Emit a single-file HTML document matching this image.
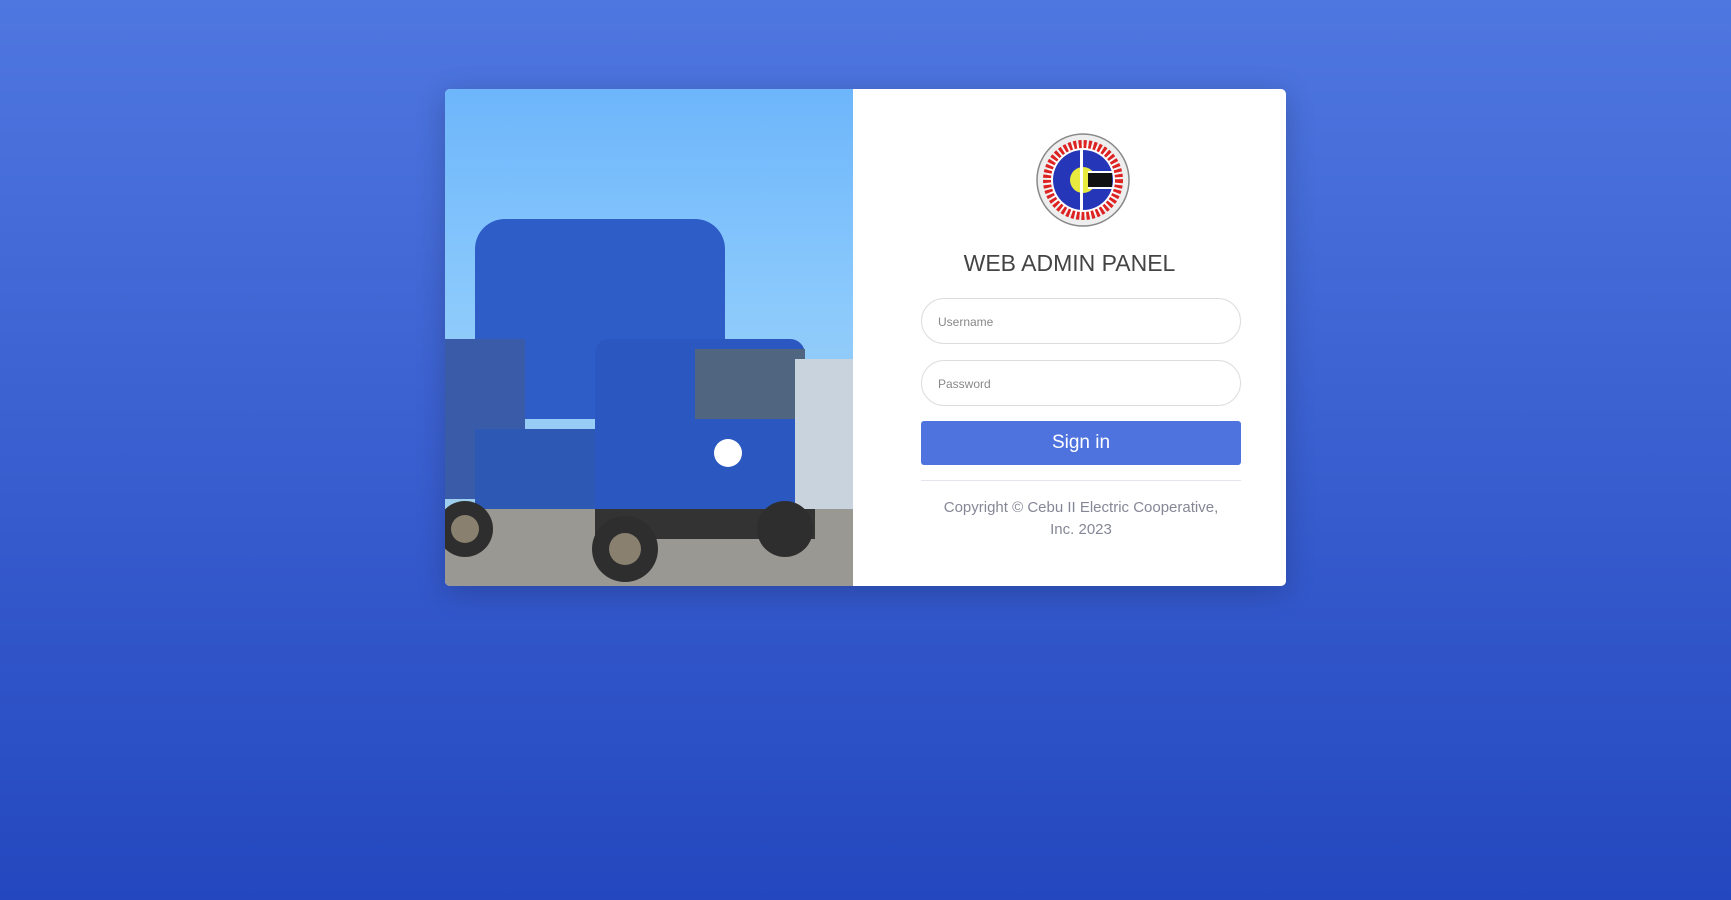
<!DOCTYPE html>
<html><head><style>
body{margin:0;width:1731px;height:900px;background:linear-gradient(#4f77e0,#2447bf);font-family:"Liberation Sans",sans-serif;position:relative;overflow:hidden}
.card{position:absolute;left:445px;top:89px;width:841px;height:497px;background:#fff;border-radius:5px;overflow:hidden;box-shadow:0 6px 30px rgba(0,0,0,.2)}
.photo{position:absolute;left:0;top:0;width:408px;height:497px;background:linear-gradient(#6db6fb 0%,#8ccafc 45%,#a7cfe8 100%)}
.in{position:absolute;left:476px;width:320px;height:46px;border:1px solid #ddd;border-radius:23px;box-sizing:border-box;font-size:12px;color:#888;padding:16px 16px}
</style></head><body>
<div class="card">
<div class="photo">
<svg width="408" height="497">
<rect x="0" y="420" width="408" height="77" fill="#9a9893"/>
<rect x="30" y="130" width="250" height="200" rx="30" fill="#2f5dc8"/>
<rect x="0" y="250" width="80" height="160" fill="#3a5ca8"/>
<rect x="30" y="340" width="130" height="80" fill="#2d59b5"/>
<rect x="150" y="250" width="210" height="200" rx="15" fill="#2a58c0"/>
<rect x="250" y="260" width="110" height="70" fill="#506680"/>
<rect x="350" y="270" width="58" height="150" fill="#c9d3dd"/>
<rect x="150" y="420" width="220" height="30" fill="#333"/>
<circle cx="20" cy="440" r="28" fill="#2e2e2e"/><circle cx="180" cy="460" r="33" fill="#2e2e2e"/><circle cx="340" cy="440" r="28" fill="#2e2e2e"/>
<circle cx="20" cy="440" r="14" fill="#8a8070"/><circle cx="180" cy="460" r="16" fill="#8a8070"/>
<circle cx="283" cy="364" r="14" fill="#fff"/>
</svg>
</div>
<svg style="position:absolute;left:591px;top:44px" width="94" height="94" viewBox="0 0 94 94">
<circle cx="47" cy="47" r="46" fill="#eee" stroke="#888" stroke-width="1.5"/>
<circle cx="47" cy="47" r="36" fill="#fff" stroke="#d22" stroke-width="8" stroke-dasharray="3 2"/>
<circle cx="47" cy="47" r="30" fill="#2536b8"/>
<circle cx="47" cy="47" r="13" fill="#e8ea40"/>
<rect x="44" y="16" width="3" height="62" fill="#fff"/>
<rect x="52" y="40" width="24" height="14" fill="#111"/><rect x="52" y="38" width="26" height="2" fill="#fff"/><rect x="52" y="54" width="26" height="2" fill="#fff"/>
</svg>
<div style="position:absolute;left:408px;width:433px;top:161px;text-align:center;font-size:23px;color:#444">WEB ADMIN PANEL</div>
<div class="in" style="top:209px">Username</div>
<div class="in" style="top:271px">Password</div>
<div style="position:absolute;left:476px;top:332px;width:320px;height:44px;background:#4e73df;border-radius:3px;color:#fff;font-size:19px;text-align:center;line-height:44px">Sign in</div>
<div style="position:absolute;left:476px;top:391px;width:320px;height:1px;background:#e3e6f0"></div>
<div style="position:absolute;left:476px;top:408px;width:320px;text-align:center;font-size:15px;line-height:22px;color:#858796">Copyright © Cebu II Electric Cooperative,<br>Inc. 2023</div>
</div>
</body></html>
